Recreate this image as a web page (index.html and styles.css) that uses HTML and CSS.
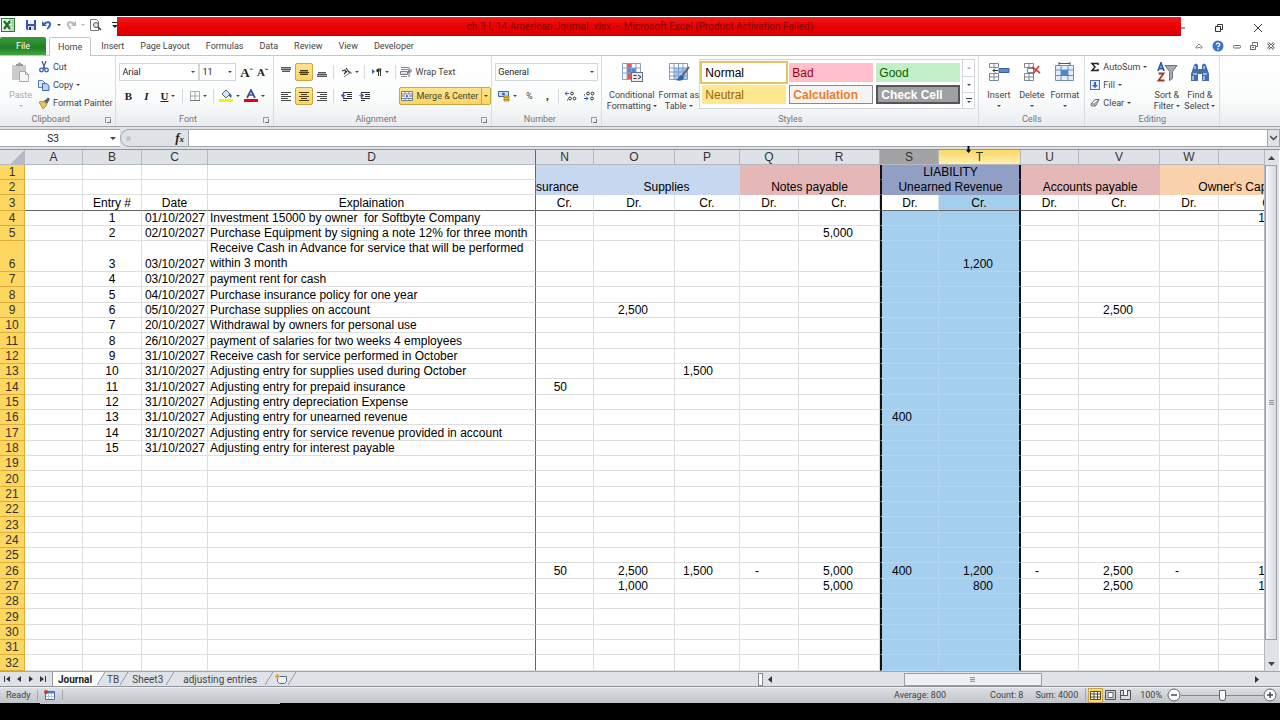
FILE: index.html
```html
<!DOCTYPE html>
<html lang="en">
<head>
  <meta charset="UTF-8">
  <title>ch 3 L 14 American Journal .xlsx - Microsoft Excel</title>
  <link rel="stylesheet" href="styles.css">
</head>
<body>

<header class="titlebar">
  <div class="quick">
    <svg class="logo" width="14" height="14" viewBox="0 0 14 14"><rect x=".5" y=".5" width="13" height="13" fill="#e9f4e4" stroke="#2c7a31"/><path d="M8 2h4v10H8M8 5h4M8 8h4" stroke="#7db87a" fill="none"/><path d="M3 3l6 8M9 3l-6 8" stroke="#1d6f27" stroke-width="2.2"/></svg>
    <span class="sep"></span>
    <button aria-label="Save"><svg width="12" height="12" viewBox="0 0 12 12"><path d="M1 1h10v10H2L1 10z" fill="#3f4fae"/><path d="M3 1h6v4H3z" fill="#f2f5ff"/><path d="M3 7h6v4H3z" fill="#cdd5ef"/><path d="M4 8h2v3H4z" fill="#232c6d"/></svg></button>
    <button aria-label="Undo"><svg width="12" height="12" viewBox="0 0 12 12"><path d="M3 5c3-3 7-2 6 1-.4 2-2 3-3 4" fill="none" stroke="#3564b8" stroke-width="2"/><path d="M1 2v5h5z" fill="#3564b8"/></svg></button>
    <i class="caret"></i>
    <button aria-label="Redo"><svg width="12" height="12" viewBox="0 0 12 12"><path d="M9 5c-3-3-7-2-6 1 .4 2 2 3 3 4" fill="none" stroke="#b4b8bf" stroke-width="2"/><path d="M11 2v5H6z" fill="#b4b8bf"/></svg></button>
    <i class="caret pale"></i>
    <button aria-label="Print preview"><svg width="13" height="12" viewBox="0 0 13 12"><path d="M1.500 .5h6l2 2v9h-8z" fill="#fff" stroke="#777"/><circle cx="7" cy="6" r="2.500" fill="#d5e6f5" stroke="#555"/><path d="M9 8l3 3" stroke="#444" stroke-width="1.600"/></svg></button>
    <span class="sep"></span>
    <svg width="6" height="7" viewBox="0 0 6 7"><path d="M0 .5h6" stroke="#222"/><path d="M0 3h6L3 6z" fill="#222"/></svg>
  </div>
  <h1 class="caption">ch 3 L 14 American Journal .xlsx &nbsp;-&nbsp; Microsoft Excel (Product Activation Failed)</h1>
  <div class="window-buttons">
    <button aria-label="Minimize"><svg width="10" height="10" viewBox="0 0 10 10"><path d="M6 5h4" stroke="#333"/></svg></button>
    <button aria-label="Restore"><svg width="10" height="10" viewBox="0 0 10 10"><path d="M1.500 3.500h5v5h-5zM3.500 3V1.500h5v5H7" fill="none" stroke="#333"/></svg></button>
    <button aria-label="Close"><svg width="10" height="10" viewBox="0 0 10 10"><path d="M1 1l8 8M9 1L1 9" stroke="#333"/></svg></button>
  </div>
</header>

<nav class="tabs">
  <button class="file">File</button>
  <button class="active">Home</button>
  <button>Insert</button>
  <button>Page Layout</button>
  <button>Formulas</button>
  <button>Data</button>
  <button>Review</button>
  <button>View</button>
  <button>Developer</button>
  <div class="mdi">
    <button aria-label="Minimize ribbon"><svg width="8" height="8" viewBox="0 0 8 8"><path d="M1 5l3-3 3 3v1H5L4 5 3 6H1z" fill="#fff" stroke="#666" stroke-width=".8"/></svg></button>
    <button aria-label="Help"><svg width="12" height="12" viewBox="0 0 12 12"><circle cx="6" cy="6" r="5.500" fill="#3b74c4"/><path d="M4.300 4.700c0-2.200 3.500-2 3.400 0C7.700 5.900 6 5.900 6 7.300M6 8.300v1.400" fill="none" stroke="#fff" stroke-width="1.300"/></svg></button>
    <button aria-label="Minimize workbook"><svg width="8" height="8" viewBox="0 0 8 8"><rect x=".5" y="3.500" width="7" height="2.500" rx="1" fill="#fff" stroke="#666"/></svg></button>
    <button aria-label="Restore workbook"><svg width="8" height="8" viewBox="0 0 8 8"><path d="M2.500 2.500v-2h5v4h-2M.5 3.500h5v4h-5zM2 5.500h2" fill="none" stroke="#666"/></svg></button>
    <button aria-label="Close workbook"><svg width="8" height="8" viewBox="0 0 8 8"><path d="M1 1l6 6M7 1L1 7" stroke="#666" stroke-width="2.600"/><path d="M1 1l6 6M7 1L1 7" stroke="#fff"/></svg></button>
  </div>
</nav>

<section class="ribbon">
  <div class="group">
    <div class="body">
      <button class="big faded"><svg width="20" height="22" viewBox="0 0 20 22"><rect x="1" y="3" width="14" height="15" rx="1" fill="#c9cbce"/><path d="M5 4V2h2c0-2 3-2 3 0h2v2z" fill="#999"/><path d="M8.500 9.500h6l3 3v7h-9z" fill="#f6f6f6" stroke="#aaa"/><path d="M14.500 9.500v3h3" fill="none" stroke="#aaa"/></svg>Paste<i class="caret pale"></i></button>
      <div class="stack three">
        <button><svg width="12" height="12" viewBox="0 0 12 12"><path d="M4 0l3 8M8 0L5 8" stroke="#44587c" stroke-width="1.200"/><circle cx="3.500" cy="9" r="1.800" fill="none" stroke="#2f5fb3" stroke-width="1.300"/><circle cx="8.500" cy="9" r="1.800" fill="none" stroke="#2f5fb3" stroke-width="1.300"/></svg>Cut</button>
        <button><svg width="12" height="12" viewBox="0 0 12 12"><path d="M.5 1.500h4l2 2v5h-6z" fill="#dbe8fa" stroke="#5a7fb8"/><path d="M4.500 4.500h4l2.500 2v5H4.500z" fill="#b7d0f3" stroke="#3f69ab"/></svg>Copy <i class="caret"></i></button>
        <button><svg width="12" height="12" viewBox="0 0 12 12"><path d="M1 5l5-1 3 4-4 4z" fill="#e9c25a" stroke="#a47c1e" stroke-width=".7"/><path d="M6 4l4-3.500L12 2 9 7z" fill="#5b6577"/></svg>Format Painter</button>
      </div>
    </div>
    <div class="label">Clipboard<span class="launch"></span></div>
  </div>

  <div class="group">
    <div class="body stack">
      <div class="row">
        <span class="combo font-name"><select aria-label="Font"><option>Arial</option></select></span>
        <span class="combo font-size"><select aria-label="Font size"><option>11</option></select></span>
        <button class="glyph grow">A<sup>ˆ</sup></button>
        <button class="glyph shrink">A<sup>ˇ</sup></button>
      </div>
      <div class="row">
        <button class="glyph"><b>B</b></button>
        <button class="glyph"><b><em>I</em></b></button>
        <button class="glyph wide"><b><u>U</u></b><i class="caret"></i></button>
        <span class="sep"></span>
        <button class="wide" aria-label="Borders"><svg width="10" height="10" viewBox="0 0 10 10"><path d="M.5 .5h9v9h-9zM5 0v10M0 5h10" fill="none" stroke="#aaa"/><path d="M0 9.500h10" stroke="#777"/></svg><i class="caret"></i></button>
        <span class="sep"></span>
        <button class="wide" aria-label="Fill color"><svg width="14" height="14" viewBox="0 0 14 14"><path d="M3 5l4-4 4 4-4 4z" fill="#dbe6f5" stroke="#56657d"/><path d="M10 4c3 1 3 3 2 5l-2-2z" fill="#3568b8"/><path d="M0 10h14v3H0z" fill="#f7f300"/></svg><i class="caret"></i></button>
        <button class="wide" aria-label="Font color"><svg width="14" height="14" viewBox="0 0 14 14"><path d="M3 9l4-8 4 8M5 6h5" fill="none" stroke="#38508c" stroke-width="1.700"/><path d="M0 10h14v3H0z" fill="#dd0511"/></svg><i class="caret"></i></button>
      </div>
    </div>
    <div class="label">Font<span class="launch"></span></div>
  </div>

  <div class="group">
    <div class="body alignment">
      <div class="stack">
        <div class="row">
          <button aria-label="Top align"><svg width="10" height="10" viewBox="0 0 10 10"><path d="M0 0h10v1H0zM0 2h10v1H0zM1 4h8v1H1z" fill="#555"/><path d="M0 1h10v1H0zM1 3h8v1H1z" fill="#aaa"/></svg></button>
          <button class="on" aria-label="Middle align"><svg width="10" height="10" viewBox="0 0 10 10"><path d="M1 3h8v1H1zM0 5h10v1H0zM1 7h8v1H1z" fill="#4c4018"/><path d="M1 4h8v1H1zM1 6h8v1H1z" fill="#a08a45"/></svg></button>
          <button aria-label="Bottom align"><svg width="10" height="10" viewBox="0 0 10 10"><path d="M1 5h8v1H1zM0 7h10v1H0zM0 9h10v1H0z" fill="#555"/><path d="M1 6h8v1H1zM0 8h10v1H0z" fill="#aaa"/></svg></button>
          <span class="sep"></span>
          <button class="wide" aria-label="Orientation"><svg width="11" height="11" viewBox="0 0 11 11"><path d="M1 4l3-1 1 3M3 7l3-3M5 1l3 4M7 4l2 2" fill="none" stroke="#333" stroke-width="1.200"/><path d="M3 10l7-5M8 5h2v2" fill="none" stroke="#777"/></svg><i class="caret"></i></button>
          <span class="sep"></span>
          <button class="wide" aria-label="Text direction"><svg width="10" height="10" viewBox="0 0 10 10"><path d="M0 2l3 2.500L0 7z" fill="#2f5fb3"/><path d="M9.500 2H6M6.500 2v7M8.500 2v7" stroke="#333"/><circle cx="6" cy="3.500" r="1.800" fill="#333"/></svg><i class="caret"></i></button>
          <span class="sep"></span>
        </div>
        <div class="row">
          <button aria-label="Align left"><svg width="10" height="10" viewBox="0 0 10 10"><path d="M0 1.500h10M0 3.500h7M0 5.500h10M0 7.500h7M0 9.500h10" stroke="#444"/></svg></button>
          <button class="on" aria-label="Center"><svg width="10" height="10" viewBox="0 0 10 10"><path d="M0 1.500h10M2 3.500h6M0 5.500h10M2 7.500h6M0 9.500h10" stroke="#4c4018"/></svg></button>
          <button aria-label="Align right"><svg width="10" height="10" viewBox="0 0 10 10"><path d="M0 1.500h10M3 3.500h7M0 5.500h10M3 7.500h7M0 9.500h10" stroke="#444"/></svg></button>
          <span class="sep"></span>
          <button aria-label="Decrease indent"><svg width="11" height="10" viewBox="0 0 11 10"><path d="M2 1.500h9M6 3.500h5M6 5.500h5M2 7.500h9M2 9.500h4" stroke="#333"/><path d="M0 4.500L3 2v5zM3 4.500h2" fill="#2f5fb3" stroke="#2f5fb3" stroke-width=".6"/></svg></button>
          <button aria-label="Increase indent"><svg width="11" height="10" viewBox="0 0 11 10"><path d="M2 1.500h9M6 3.500h5M6 5.500h5M2 7.500h9M2 9.500h4" stroke="#333"/><path d="M5 4.500L2 2v5zM0 4.500h2" fill="#2f5fb3" stroke="#2f5fb3" stroke-width=".6"/></svg></button>
        </div>
      </div>
      <div class="stack">
        <div class="row">
          <button class="text"><svg width="12" height="12" viewBox="0 0 12 12"><path d="M1 1.500h7M1 3.500h7M1 10.500h6" stroke="#888"/><path d="M.5 5.500h7v3h-7z" fill="#dde4ee" stroke="#778"/><path d="M9 1v10M10 5h-2M11 3v3H8" fill="none" stroke="#667"/></svg>Wrap Text</button>
        </div>
        <div class="row">
          <button class="text on"><svg width="12" height="12" viewBox="0 0 12 12"><path d="M.5 1.500h11v9H.5zM.5 4h11M.5 8.500h11M4 1.500V4M8 1.500V4M4 8.500v2M8 8.500v2" fill="#fff" stroke="#57658a" stroke-width=".8"/><path d="M1 6h3M11 6H8M5 7.500L6 5l1 2.500" fill="none" stroke="#2f5fb3"/></svg>Merge &amp; Center<span class="split"><i class="caret"></i></span></button>
        </div>
      </div>
    </div>
    <div class="label">Alignment<span class="launch"></span></div>
  </div>

  <div class="group">
    <div class="body stack">
      <div class="row">
        <span class="combo number"><select aria-label="Number format"><option>General</option></select></span>
      </div>
      <div class="row">
        <button class="wide" aria-label="Accounting format"><svg width="12" height="12" viewBox="0 0 12 12"><path d="M.5 1.500h10v5H.5z" fill="#c9dcf5" stroke="#4467a7"/><circle cx="5.500" cy="4" r="1.500" fill="#4467a7"/><path d="M6 6h5v5H6zM6 7.500h5M6 9.500h5" fill="#f3cc58" stroke="#967119" stroke-width=".7"/></svg><i class="caret"></i></button>
        <button>%</button>
        <button class="glyph"><b>,</b></button>
        <span class="sep"></span>
        <button aria-label="Increase decimal"><svg width="12" height="10" viewBox="0 0 12 10"><path d="M0 2.500h4M2 .5L0 2.500l2 2" fill="none" stroke="#2f5fb3"/><circle cx="7" cy="2.500" r="1.400" fill="none" stroke="#333"/><circle cx="5" cy="7.500" r="1.400" fill="none" stroke="#333"/><circle cx="9.500" cy="7.500" r="1.400" fill="none" stroke="#333"/><path d="M2 9h1" stroke="#333"/></svg></button>
        <button aria-label="Decrease decimal"><svg width="12" height="10" viewBox="0 0 12 10"><circle cx="5" cy="2.500" r="1.400" fill="none" stroke="#333"/><circle cx="9.500" cy="2.500" r="1.400" fill="none" stroke="#333"/><path d="M1 4h1" stroke="#333"/><path d="M1 7.500h4M3 5.500l2 2-2 2" fill="none" stroke="#2f5fb3"/><circle cx="9" cy="7.500" r="1.400" fill="none" stroke="#333"/></svg></button>
      </div>
    </div>
    <div class="label">Number<span class="launch"></span></div>
  </div>

  <div class="group">
    <div class="body">
      <button class="big wider"><svg width="22" height="22" viewBox="0 0 22 22"><path d="M1.500 1.500h18v16h-18z" fill="#fff"/><path d="M6 1h4v5H6zM6 11h4v6H6z" fill="#dc5b5b"/><path d="M10 6h5v5H6V6z" fill="#5b86d3"/><path d="M1.500 1.500h18v16h-18zM1.500 6h18M1.500 11h18M6 1v17M10.500 1v17M15 1v17" fill="none" stroke="#8ba0c8"/><rect x="10.500" y="10.500" width="11" height="9" fill="#e8edf5" stroke="#66738c"/><path d="M12.500 13.500h3M12.500 16.500h3M17 13l3 2-3 2" fill="none" stroke="#333"/></svg>Conditional<br>Formatting <i class="caret"></i></button>
      <button class="big mid"><svg width="22" height="22" viewBox="0 0 22 22"><path d="M1.500 1.500h18v16h-18z" fill="#fff"/><path d="M6 6h13v11H6z" fill="#a9c8f1"/><path d="M1.500 1.500h18v16h-18zM1.500 6h18M1.500 10h18M1.500 14h18M6 1v17M10.500 1v17M15 1v17" fill="none" stroke="#7c9bd0"/><path d="M21 5l-7 9" stroke="#6b6257" stroke-width="2"/><path d="M14 13c-3 0-3 4-6 5 4 2 8 0 8-3z" fill="#39639f"/></svg>Format as<br>Table <i class="caret"></i></button>
      <div class="gallery">
        <div class="swatches">
          <button class="normal">Normal</button>
          <button class="bad">Bad</button>
          <button class="good">Good</button>
          <button class="neutral">Neutral</button>
          <button class="calc">Calculation</button>
          <button class="check">Check Cell</button>
        </div>
        <div class="gallery-scroll">
          <button aria-label="Previous styles"><i class="caret up"></i></button>
          <button aria-label="Next styles"><i class="caret"></i></button>
          <button aria-label="More styles"><svg width="6" height="6" viewBox="0 0 6 6"><path d="M0 .5h6" stroke="#444"/><path d="M1 3h4L3 5z" fill="#444"/></svg></button>
        </div>
      </div>
    </div>
    <div class="label">Styles</div>
  </div>

  <div class="group">
    <div class="body">
      <button class="big"><svg width="22" height="22" viewBox="0 0 22 22"><path d="M1.500 1.500h9v4h-9zM6 1.500v4M1.500 11.500h9v7h-9zM1.500 15h9M6 11.500v7" fill="#fff" stroke="#7b8698"/><path d="M11 6.500h10v4H11z" fill="#5a8ad6" stroke="#3a5f9f"/><path d="M5 8.500h5M7 6.500l-2 2 2 2" fill="none" stroke="#333"/></svg>Insert<i class="caret"></i></button>
      <button class="big"><svg width="22" height="22" viewBox="0 0 22 22"><path d="M3.500 1.500h9v4h-9zM8 1.500v4M6.500 6.500h6v4h-6zM3.500 11.500h9v7h-9zM3.500 15h9M8 11.500v7" fill="#fff" stroke="#7b8698"/><path d="M11 5l8 6M18 4l-6 8" stroke="#d63b32" stroke-width="1.600"/></svg>Delete<i class="caret"></i></button>
      <button class="big"><svg width="22" height="22" viewBox="0 0 22 22"><path d="M1.500 3.500h18v15h-18z" fill="#e4edfa"/><path d="M1.500 3.500h18v15h-18zM1.500 8h18M1.500 13.500h18M7 3v16M14 3v16" fill="none" stroke="#748db9"/><path d="M7 8h7v6H7z" fill="#4f83d6"/><path d="M5 1.500h11M5 0v3M16 0v3" stroke="#555"/></svg>Format<i class="caret"></i></button>
    </div>
    <div class="label">Cells</div>
  </div>

  <div class="group">
    <div class="body">
      <div class="stack three editing">
        <button><svg width="10" height="10" viewBox="0 0 10 10"><path d="M8 3V1.500H2L5 5 2 8.500h6V7" fill="none" stroke="#222" stroke-width="1.500"/></svg>AutoSum <i class="caret"></i></button>
        <button><svg width="10" height="10" viewBox="0 0 10 10"><rect x=".5" y=".5" width="9" height="9" fill="#e6effb" stroke="#5372a5"/><path d="M4 2h2v3h2L5 8 2 5h2z" fill="#2f66c0"/></svg>Fill <i class="caret"></i></button>
        <button><svg width="10" height="10" viewBox="0 0 10 10"><path d="M1 6l4-4.500h4L5.500 8h-4z" fill="#fff" stroke="#667"/><path d="M1 6h3.500L5.500 8M4.500 6L9 1.500" fill="none" stroke="#667"/></svg>Clear <i class="caret"></i></button>
      </div>
      <button class="big"><svg width="22" height="22" viewBox="0 0 22 22"><path d="M2 9l3-8 3 8M3 6.500h4" fill="none" stroke="#2d5fae" stroke-width="1.800"/><path d="M2.500 11.500h5l-5 7h6" fill="none" stroke="#a3362c" stroke-width="1.800"/><path d="M9 3.500h12l-4.500 6v7l-3 2v-9z" fill="#a9adb3" stroke="#6d7278"/></svg>Sort &amp;<br>Filter <i class="caret"></i></button>
      <button class="big"><svg width="22" height="22" viewBox="0 0 22 22"><path d="M5 3q2-3 4 0v4h4V3q2-3 4 0l3 9v7h-7v-7H9v7H2v-7z" fill="#446ea9"/><path d="M4 12h4M14 12h4M6 4v3M15 4v3M4 14v4M15 14v4" stroke="#b8cfee" stroke-width="1.500"/></svg>Find &amp;<br>Select <i class="caret"></i></button>
    </div>
    <div class="label">Editing</div>
  </div>
</section>

<section class="formula-bar">
  <div class="name-box"><input type="text" value="S3" aria-label="Name box"><i class="caret big-caret"></i></div>
  <div class="fx"><span class="knob"></span><em>f<small>x</small></em></div>
  <input class="formula" type="text" aria-label="Formula">
  <button class="expand" aria-label="Expand formula bar"><svg width="7" height="6" viewBox="0 0 7 6"><path d="M0 1l3.500 3.500L7 1" fill="none" stroke="#444" stroke-width="1.500"/></svg></button>
</section>

<main class="workspace">
  <div class="sheet">
    <table>
      <colgroup id="cols"></colgroup>
      <thead><tr id="letters"></tr></thead>
      <tbody id="cells"></tbody>
    </table>
  </div>
  <div class="vscroll">
    <button aria-label="Scroll up"><svg width="7" height="4" viewBox="0 0 7 4"><path d="M0 4l3.500-4L7 4z" fill="#444"/></svg></button>
    <div class="thumb"><span class="grip"></span></div>
    <button class="last" aria-label="Scroll down"><svg width="7" height="4" viewBox="0 0 7 4"><path d="M0 0l3.500 4L7 0z" fill="#444"/></svg></button>
  </div>
  <svg class="pointer" width="5" height="7" viewBox="0 0 5 7"><path d="M1.500 0h2v4H5L2.500 7 0 4h1.500z"/></svg>
</main>

<footer class="sheet-tabs">
  <div class="moves">
    <button aria-label="First sheet"><svg width="6" height="6" viewBox="0 0 6 6"><path d="M.5 0v6" stroke="#333"/><path d="M6 0L2 3l4 3z" fill="#333"/></svg></button>
    <button aria-label="Previous sheet"><svg width="4" height="6" viewBox="0 0 4 6"><path d="M4 0L0 3l4 3z" fill="#333"/></svg></button>
    <button aria-label="Next sheet"><svg width="4" height="6" viewBox="0 0 4 6"><path d="M0 0l4 3-4 3z" fill="#333"/></svg></button>
    <button aria-label="Last sheet"><svg width="6" height="6" viewBox="0 0 6 6"><path d="M5.500 0v6" stroke="#333"/><path d="M0 0l4 3-4 3z" fill="#333"/></svg></button>
  </div>
  <button class="current">Journal</button><svg width="9" height="14" viewBox="0 0 9 14"><path d="M0 0h8L0 14z" fill="#fff"/><path d="M8 0L0 13" stroke="#999"/></svg>
  <button>TB</button><svg width="9" height="14" viewBox="0 0 9 14"><path d="M8 0L0 13" stroke="#999"/></svg>
  <button class="roomy">Sheet3</button><svg width="9" height="14" viewBox="0 0 9 14"><path d="M8 0L0 13" stroke="#999"/></svg>
  <button class="long">adjusting entries</button><svg width="9" height="14" viewBox="0 0 9 14"><path d="M8 0L0 13" stroke="#999"/></svg>
  <button aria-label="Insert worksheet"><svg width="12" height="11" viewBox="0 0 12 11"><path d="M2.500 2.500h9v5l-2 2h-5l-2-2z" fill="#eef3fb" stroke="#566a93"/><path d="M2.500 0v5M0 2.500h5" stroke="#e39a2c" stroke-width="1.600"/></svg></button><svg width="9" height="14" viewBox="0 0 9 14"><path d="M8 0L0 13" stroke="#999"/></svg>
  <div class="hscroll">
    <span class="splitter"></span>
    <button aria-label="Scroll left"><svg width="4" height="7" viewBox="0 0 4 7"><path d="M4 0L0 3.500 4 7z" fill="#333"/></svg></button>
    <div class="track"><div class="thumb"><span class="grip"></span></div></div>
    <button aria-label="Scroll right"><svg width="4" height="7" viewBox="0 0 4 7"><path d="M0 0l4 3.500L0 7z" fill="#333"/></svg></button>
  </div>
</footer>

<footer class="status">
  <span class="ready">Ready</span>
  <button class="macro" aria-label="Record macro"><svg width="11" height="10" viewBox="0 0 11 10"><path d="M1.500 1.500h9v8h-9z" fill="#fff" stroke="#4a6aa5"/><path d="M1 2.500h10" stroke="#4a7cd0" stroke-width="2"/><path d="M4.500 4v5M7.500 4v5M2 6.500h8" stroke="#b5c6e3"/><circle cx="2" cy="2" r="2" fill="#c8373a"/></svg></button>
  <span class="average">Average: 800</span>
  <span class="count">Count: 8</span>
  <span class="sum">Sum: 4000</span>
  <div class="views">
    <button class="on" aria-label="Normal view"><svg width="11" height="9" viewBox="0 0 11 9"><path d="M.5 .5h10v8H.5zM0 3h11M0 6h11M4 0v9M7.500 0v9" fill="#fff" stroke="#5d4e1c"/></svg></button>
    <button aria-label="Page layout view"><svg width="11" height="10" viewBox="0 0 11 10"><path d="M.5 .5h10v9H.5z" fill="#ccc" stroke="#555"/><path d="M3 2.500h5v5H3z" fill="#fff" stroke="#666"/></svg></button>
    <button aria-label="Page break view"><svg width="11" height="10" viewBox="0 0 11 10"><path d="M.5 .5h10v9H.5z" fill="#ddd" stroke="#555"/><path d="M3.500 0v5.500h4V0M1 5.500h3" fill="#fff" stroke="#555"/></svg></button>
  </div>
  <span class="percent">100%</span>
  <div class="zoom">
    <button aria-label="Zoom out"><svg width="14" height="14" viewBox="0 0 14 14"><circle cx="7" cy="7" r="6" fill="#f8f8f8" stroke="#666"/><path d="M4 7h6" stroke="#444" stroke-width="1.400"/></svg></button>
    <input type="range" min="0" max="100" value="50" aria-label="Zoom">
    <button aria-label="Zoom in"><svg width="14" height="14" viewBox="0 0 14 14"><circle cx="7" cy="7" r="6" fill="#f8f8f8" stroke="#666"/><path d="M4 7h6M7 4v6" stroke="#444" stroke-width="1.400"/></svg></button>
  </div>
</footer>

<script src="script.js"></script>
</body>
</html>
```

FILE: styles.css
```css
* {
  box-sizing: border-box;
}

body {
  margin: 0;
  height: 100vh;
  padding-top: 16px;
  display: flex;
  flex-direction: column;
  background: #000;
  color: #444;
  font-family: Roboto, "Open Sans", sans-serif;
  font-size: 9px;
  line-height: 11px;
  overflow: hidden;
}

/* thin strip left visible under the status bar */
body::after {
  content: "";
  flex: none;
  width: 240px;
  height: 1px;
  margin: 0 0 16px 40px;
  background: #c9cccf;
}

button,
input,
select {
  font: inherit;
  color: inherit;
  margin: 0;
  padding: 0;
  border: none;
  background: none;
}

button {
  display: flex;
  align-items: center;
  justify-content: center;
  white-space: nowrap;
}

svg {
  flex: none;
  display: block;
}

.caret {
  display: inline-block;
  flex: none;
  border: 2px solid transparent;
  border-top-color: #444;
  border-bottom: none;
}

.caret.pale {
  border-top-color: #bbb;
}

.caret.up {
  border-top: none;
  border-bottom: 2px solid #aaa;
}

.big-caret {
  border-width: 3px;
  border-bottom: none;
}

.sep {
  width: 1px;
  height: 14px;
  margin: 0 3px 0 2px;
  background: #d5d8dc;
}

/* title bar */
.titlebar {
  display: flex;
  height: 21px;
  flex: none;
  background: #fff;
}

.quick {
  display: flex;
  align-items: center;
  gap: 4px;
  width: 117px;
  padding: 0 0 3px 1px;
}

.quick .sep {
  margin: 0 2px 0 0;
}

.caption {
  flex: 1;
  margin: 1px 0 0;
  padding-right: 18px;
  border-bottom: 1px solid #c40000;
  background: linear-gradient(#f01b1b, #ea0000 50%, #dd0000);
  color: #7e0808;
  font-size: 10px;
  font-weight: normal;
  line-height: 19px;
  text-align: center;
  height: 19px;
}

.window-buttons {
  display: flex;
  width: 99px;
  justify-content: flex-end;
  gap: 29px;
  padding: 3px 17px 0 0;
}

/* ribbon tabs */
.tabs {
  display: flex;
  height: 19px;
  flex: none;
  background: #fff;
  border-bottom: 1px solid #c3c7cc;
}

.tabs > button {
  padding: 0 8px;
}

.tabs .file {
  width: 46px;
  background: linear-gradient(#3c9a3c, #1f7d26 60%, #43a83c);
  color: #fff;
  border-radius: 2px 2px 0 0;
  margin-right: 3px;
}

.tabs .active {
  height: 19px;
  margin-right: 2px;
  border: 1px solid #c3c7cc;
  border-bottom: none;
  border-radius: 2px 2px 0 0;
  background: #fff;
}

.mdi {
  display: flex;
  gap: 9px;
  margin-left: auto;
  padding-right: 5px;
}

/* ribbon */
.ribbon {
  display: flex;
  height: 71px;
  flex: none;
  background: linear-gradient(#fff, #fbfcfc 60%, #e9ecef);
  border-bottom: 1px solid #a0a4a9;
}

.group {
  display: flex;
  flex-direction: column;
  border-right: 1px solid #d9dce0;
}

.body {
  display: flex;
  flex: 1;
  padding: 4px 3px 0;
}

.alignment {
  padding-right: 0;
}

.label {
  position: relative;
  height: 13px;
  line-height: 13px;
  color: #777;
  text-align: center;
  padding-right: 14px;
}

.group:nth-child(n+5) .label {
  padding-right: 0;
}

.launch {
  position: absolute;
  right: 4px;
  bottom: 3px;
  width: 6px;
  height: 6px;
  border-left: 1px solid #999;
  border-top: 1px solid #999;
}

.launch::after {
  content: "";
  position: absolute;
  right: 0;
  bottom: 0;
  width: 3px;
  height: 3px;
  border-right: 1px solid #777;
  border-bottom: 1px solid #777;
}

.stack {
  display: flex;
  flex-direction: column;
}

.row {
  display: flex;
  align-items: center;
  height: 24px;
}

.row button {
  width: 18px;
  height: 18px;
}

.row .wide {
  width: 25px;
  gap: 3px;
}

.row .on {
  background: linear-gradient(#fde48d, #fbd560);
  border: 1px solid #c9a548;
  border-radius: 2px;
}

.row .text {
  width: auto;
  gap: 3px;
  padding-left: 1px;
}

.split {
  display: flex;
  align-items: center;
  align-self: stretch;
  padding: 0 2px;
  border-left: 1px solid #c9a548;
}

.three {
  margin-top: -2px;
}

.three button {
  height: 18px;
  gap: 3px;
  justify-content: flex-start;
}

.big {
  display: block;
  width: 33px;
  height: 53px;
  text-align: center;
}

.big svg {
  margin: 0 auto 6px;
}

/* a one-line caption puts its arrow on the second line */
.big > .caret:not(br ~ .caret) {
  display: block;
  width: 4px;
  margin: 4px auto 5px;
}

.big .caret {
  vertical-align: 2px;
}

.big.wider {
  width: 53px;
}

.big.mid {
  width: 41px;
}

.faded {
  width: 35px;
  color: #aaa;
}

.combo {
  position: relative;
  height: 18px;
  border: 1px solid #d3d6da;
  background: #fff;
}

.combo select {
  width: 100%;
  height: 16px;
  padding-left: 2px;
  appearance: none;
  color: #222;
}

.combo::after {
  content: "";
  position: absolute;
  right: 3px;
  top: 7px;
  border: 2px solid transparent;
  border-top-color: #444;
  border-bottom: none;
}

.font-name {
  width: 80px;
}

.font-size {
  width: 37px;
}

.number {
  width: 103px;
}

.glyph {
  font-family: "Liberation Serif", serif;
  font-size: 11px;
  color: #222;
}

.row .grow,
.row .shrink {
  width: 16px;
  font-weight: bold;
}

.grow {
  font-size: 13px;
  margin-left: 2px;
}

.glyph sup {
  font-size: 9px;
  line-height: 6px;
}

.gallery {
  display: flex;
  height: 50px;
  margin-top: -1px;
  border: 1px solid #d3d6da;
  background: #fff;
}

.swatches {
  display: grid;
  grid-template-columns: repeat(3, 84px);
  grid-auto-rows: 19px;
  gap: 3px;
  padding: 3px 2px 2px;
}

.swatches button {
  justify-content: flex-start;
  padding-left: 3px;
  font-family: "Liberation Sans", Arial, sans-serif;
  font-size: 12px;
  line-height: 14px;
}

.swatches .normal {
  color: #000;
  outline: 2px solid #e3c463;
}

.bad {
  background: #ffc0cb;
  color: #9c0006;
}

.good {
  background: #c3efc8;
  color: #006100;
}

.neutral {
  background: #fde78f;
  color: #9c6500;
}

.swatches .calc {
  background: #f4f4f4;
  border: 1px solid #8a8a8a;
  color: #ef7c1c;
  font-weight: bold;
}

.swatches .check {
  background: #a0a0a2;
  border: 2px solid #555;
  color: #fff;
  font-weight: bold;
}

.gallery-scroll {
  display: grid;
  grid-template-rows: repeat(3, 1fr);
  width: 12px;
  border-left: 1px solid #d3d6da;
}

.gallery-scroll button + button {
  border-top: 1px solid #d3d6da;
}

.editing {
  padding: 0 6px 0 2px;
  width: 62px;
}

/* formula bar */
.formula-bar {
  display: flex;
  height: 23px;
  flex: none;
  padding: 2px 0;
  background: #dfe3e8;
  border-bottom: 1px solid #8f949a;
}

.formula-bar > * {
  border-top: 1px solid #a3a7ac;
  border-bottom: 1px solid #a3a7ac;
}

.name-box {
  display: flex;
  align-items: center;
  width: 120px;
  padding-right: 4px;
  background: #fff;
}

.name-box input {
  flex: 1;
  min-width: 0;
  padding-right: 4px;
  text-align: center;
  color: #222;
  font-size: 10px;
}

.fx {
  display: flex;
  align-items: center;
  justify-content: space-between;
  width: 69px;
  padding: 0 4px 0 5px;
  border-left: 1px solid #a3a7ac;
  border-right: 1px solid #a3a7ac;
  border-radius: 9px 0 0 9px;
  font-family: "Liberation Serif", serif;
  font-size: 13px;
  font-weight: bold;
  color: #222;
}

.fx small {
  font-size: 9px;
}

.knob {
  width: 5px;
  height: 5px;
  border-radius: 50%;
  background: #c3c7cc;
}

.formula {
  flex: 1;
  background: #fff;
}

.expand {
  width: 13px;
  border: 1px solid #a3a7ac;
}

/* worksheet */
.workspace {
  position: relative;
  display: flex;
  flex: 1;
  min-height: 0;
  background: #fff;
}

.sheet {
  flex: 1;
  min-width: 0;
  overflow: hidden;
}

.sheet table {
  width: 100%;
  table-layout: fixed;
  border-spacing: 0;
  color: #000;
  font-family: "Liberation Sans", Arial, sans-serif;
  font-size: 12px;
  line-height: 14px;
}

thead tr,
tbody tr {
  height: 15px;
}

tbody tr:nth-child(3),
tbody tr:nth-child(3n+8) {
  height: 16px;
}

th,
td {
  padding: 0;
  border-right: 1px solid #dcdee0;
  border-bottom: 1px solid #dcdee0;
  font-weight: normal;
  vertical-align: bottom;
  white-space: nowrap;
  overflow: hidden;
}

thead th {
  background: #dee2e7;
  border-color: #b4b9bf;
  color: #333;
}

thead .corner {
  background: linear-gradient(135deg, #dee2e7 65%, #b6bbc1 65%);
}

thead .active {
  background: #a3a3a3;
}

thead .picked {
  background: linear-gradient(#fbd65f, #fff1b5);
}

tbody th {
  background: #fdd75f;
  border-color: #dfae3a;
  color: #333;
}

.center {
  text-align: center;
}

.date {
  text-align: right;
  padding-right: 2px;
}

.note {
  padding-left: 2px;
}

.wrap {
  line-height: 15px;
  white-space: normal;
}

.num {
  text-align: right;
  padding-right: 26px;
}

.dash {
  text-align: right;
  padding-right: 39px;
}

.freeze-right {
  border-right-color: #666;
}

.freeze-bottom td {
  border-bottom-color: #666;
}

.asset {
  background: #c6d8ef;
  border-color: #c6d8ef;
}

.debt {
  background: #e5b8b7;
  border-color: #e5b8b7;
}

.equity {
  background: #fad2ac;
  border-color: #fad2ac;
}

.picked-head {
  background: #929fc5;
  border-color: #929fc5;
}

.picked-cell {
  background: #a5cfef;
  border-color: #b2d6f0;
}

.active-cell {
  background: #fff;
}

.edge-left {
  border-left: 2px solid #111;
}

.edge-right {
  border-right: 2px solid #111;
}

.pointer {
  position: absolute;
  left: 966px;
  top: -4px;
}

.grip {
  width: 5px;
  height: 5px;
  background: repeating-linear-gradient(#999 0 1px, #ddd 1px 2px);
}

.vscroll {
  display: flex;
  flex-direction: column;
  width: 16px;
  padding-right: 2px;
  background: #dfe3e8;
  border-left: 1px solid #b4b9bf;
  border-right: 1px solid #fff;
}

.vscroll button {
  height: 15px;
}

.vscroll .last {
  margin-top: auto;
}

.thumb {
  display: flex;
  align-items: center;
  justify-content: center;
  border: 1px solid #9a9fa6;
  background: #eef0f3;
}

.vscroll .thumb {
  flex: 0 1 475px;
  background: linear-gradient(90deg, #f6f7f9, #d5dae0);
}

/* sheet tabs */
.sheet-tabs {
  display: flex;
  height: 15px;
  flex: none;
  background: #dfe3e8;
  border-top: 1px solid #a3a7ac;
  font-size: 10px;
}

.moves {
  display: flex;
  align-items: center;
  justify-content: space-between;
  width: 53px;
  padding: 0 6px 0 4px;
  border-right: 1px solid #999;
}

.sheet-tabs > button {
  padding: 0 1px;
}

.sheet-tabs .current {
  padding: 0 5px;
  background: #fff;
  color: #222;
  font-weight: bold;
}

.sheet-tabs .roomy {
  padding: 0 3px;
}

.sheet-tabs .long {
  padding: 0 8px;
}

.hscroll {
  display: flex;
  align-items: center;
  width: 522px;
  margin-left: auto;
  padding-right: 16px;
}

.hscroll button {
  width: 14px;
}

.splitter {
  width: 5px;
  height: 13px;
  border: 1px solid #888;
  background: #fff;
}

.track {
  flex: 1;
  padding-left: 25%;
}

.track .thumb {
  width: 40%;
  height: 13px;
}

/* status bar */
.status {
  display: flex;
  align-items: center;
  height: 17px;
  flex: none;
  background: linear-gradient(#dde0e4, #c0c4c9);
  border-top: 1px solid #8f949a;
  box-shadow: inset 0 1px 0 #eef0f2;
}

.ready {
  padding: 0 6px;
  border-right: 1px solid #a3a7ac;
}

.macro {
  width: 25px;
  border-right: 1px solid #a3a7ac;
}

.average {
  margin-left: auto;
}

.count {
  margin-left: 44px;
}

.sum {
  margin-left: 12px;
}

.views {
  display: flex;
  margin: 0 7px;
  padding-left: 2px;
  border-left: 1px solid #a3a7ac;
}

.views button {
  width: 15px;
  height: 15px;
}

.views .on {
  background: #fbd968;
  border: 1px solid #c9a548;
}

.zoom {
  display: flex;
  align-items: center;
  margin-left: 5px;
  padding-right: 3px;
}

.zoom input {
  width: 82px;
  height: 14px;
  appearance: none;
  background: linear-gradient(#888, #888) center / 100% 1px no-repeat;
}

.zoom input::-webkit-slider-thumb {
  appearance: none;
  width: 7px;
  height: 11px;
  border: 1px solid #666;
  border-radius: 1px 1px 4px 4px;
  background: #f8f8f8;
}
```

FILE: script.js
```js
const columns = [
  ['A', 58], ['B', 59], ['C', 66], ['D', 328], ['N', 58], ['O', 81], ['P', 65], ['Q', 59],
  ['R', 81], ['S', 59], ['T', 82], ['U', 58], ['V', 81], ['W', 59], ['', 103]
];
const keys = 'A B C D N O P Q R S T U V W X'.split(' ');

const entries = [
  ['01/10/2027', 'Investment 15000 by owner \u00a0for Softbyte Company'],
  ['02/10/2027', 'Purchase Equipment by signing a note 12% for three month'],
  ['03/10/2027', 'Receive Cash in Advance for service that will be performed within 3 month'],
  ['03/10/2027', 'payment rent for cash'],
  ['04/10/2027', 'Purchase insurance policy for one year'],
  ['05/10/2027', 'Purchase supplies on account'],
  ['20/10/2027', 'Withdrawal by owners for personal use'],
  ['26/10/2027', 'payment of salaries for two weeks 4 employees'],
  ['31/10/2027', 'Receive cash for service performed in October'],
  ['31/10/2027', 'Adjusting entry for supplies used during October'],
  ['31/10/2027', 'Adjusting entry for prepaid insurance'],
  ['31/10/2027', 'Adjusting entry depreciation Expense'],
  ['31/10/2027', 'Adjusting entry for unearned revenue'],
  ['31/10/2027', 'Adjusting entry for service revenue provided in account'],
  ['31/10/2027', 'Adjusting entry for interest payable']
];

const amounts = {
  R5: '5,000', T6: '1,200', O9: '2,500', V9: '2,500', P13: '1,500', N14: '50', S16: '400', X4: '15,000',
  N26: '50', O26: '2,500', P26: '1,500', Q26: '-', R26: '5,000', S26: '400', T26: '1,200',
  U26: '-', V26: '2,500', W26: '-', X26: '15,000',
  O27: '1,000', R27: '5,000', T27: '800', V27: '2,500', X27: '15,000'
};

// account heading, columns it covers, colour class
const accounts = [
  ['surance', 1, 'asset'],
  ['Supplies', 2, 'asset center'],
  ['Notes payable', 2, 'debt center'],
  ['Unearned Revenue', 2, 'picked-head center edge-left edge-right'],
  ['Accounts payable', 2, 'debt center'],
  ["Owner's Capital", 2, 'equity center']
];

function cell(text, cls, span) {
  return `<td class="${cls}"${span > 1 ? ` colspan="${span}"` : ''}>${text}</td>`;
}

function leftCells(row) {
  const entry = entries[row - 4];
  const texts = row === 3 ? ['Entry #', 'Date', 'Explaination'] : entry ? [row - 3, ...entry] : ['', '', ''];
  return cell('', '') + cell(texts[0], 'center') +
    cell(texts[1], row === 3 ? 'center' : 'date') +
    cell(texts[2], (row === 3 ? 'center' : row === 6 ? 'note wrap' : 'note') + ' freeze-right');
}

function rightCells(row) {
  if (row < 3) {
    return accounts.map(([name, span, cls]) => {
      const text = row === 2 ? name : name.startsWith('Unearned') ? 'LIABILITY' : '';
      return cell(text, cls, span);
    }).join('');
  }
  return keys.slice(4).map(key => {
    const text = row === 3 ? ('NPRTVX'.includes(key) ? 'Cr.' : 'Dr.') : amounts[key + row] || '';
    let cls = row === 3 ? 'center' : text === '-' ? 'dash' : 'num';
    if (key === 'S') cls += row === 3 ? ' active-cell edge-left' : ' picked-cell edge-left';
    if (key === 'T') cls += ' picked-cell edge-right';
    return cell(text, cls);
  }).join('');
}

document.getElementById('cols').innerHTML = '<col style="width:25px">' +
  columns.map(([, width]) => `<col style="width:${width}px">`).join('');

document.getElementById('letters').innerHTML = '<th class="corner"></th>' +
  columns.map(([name]) => {
    const cls = name === 'S' ? 'active' : name === 'T' ? 'picked' : name === 'D' ? 'freeze-right' : '';
    return `<th class="${cls}">${name}</th>`;
  }).join('');

let rows = '';
for (let row = 1; row <= 32; row++) {
  rows += `<tr class="${row === 3 ? 'freeze-bottom' : ''}"><th>${row}</th>${leftCells(row)}${rightCells(row)}</tr>`;
}
document.getElementById('cells').innerHTML = rows;
```
